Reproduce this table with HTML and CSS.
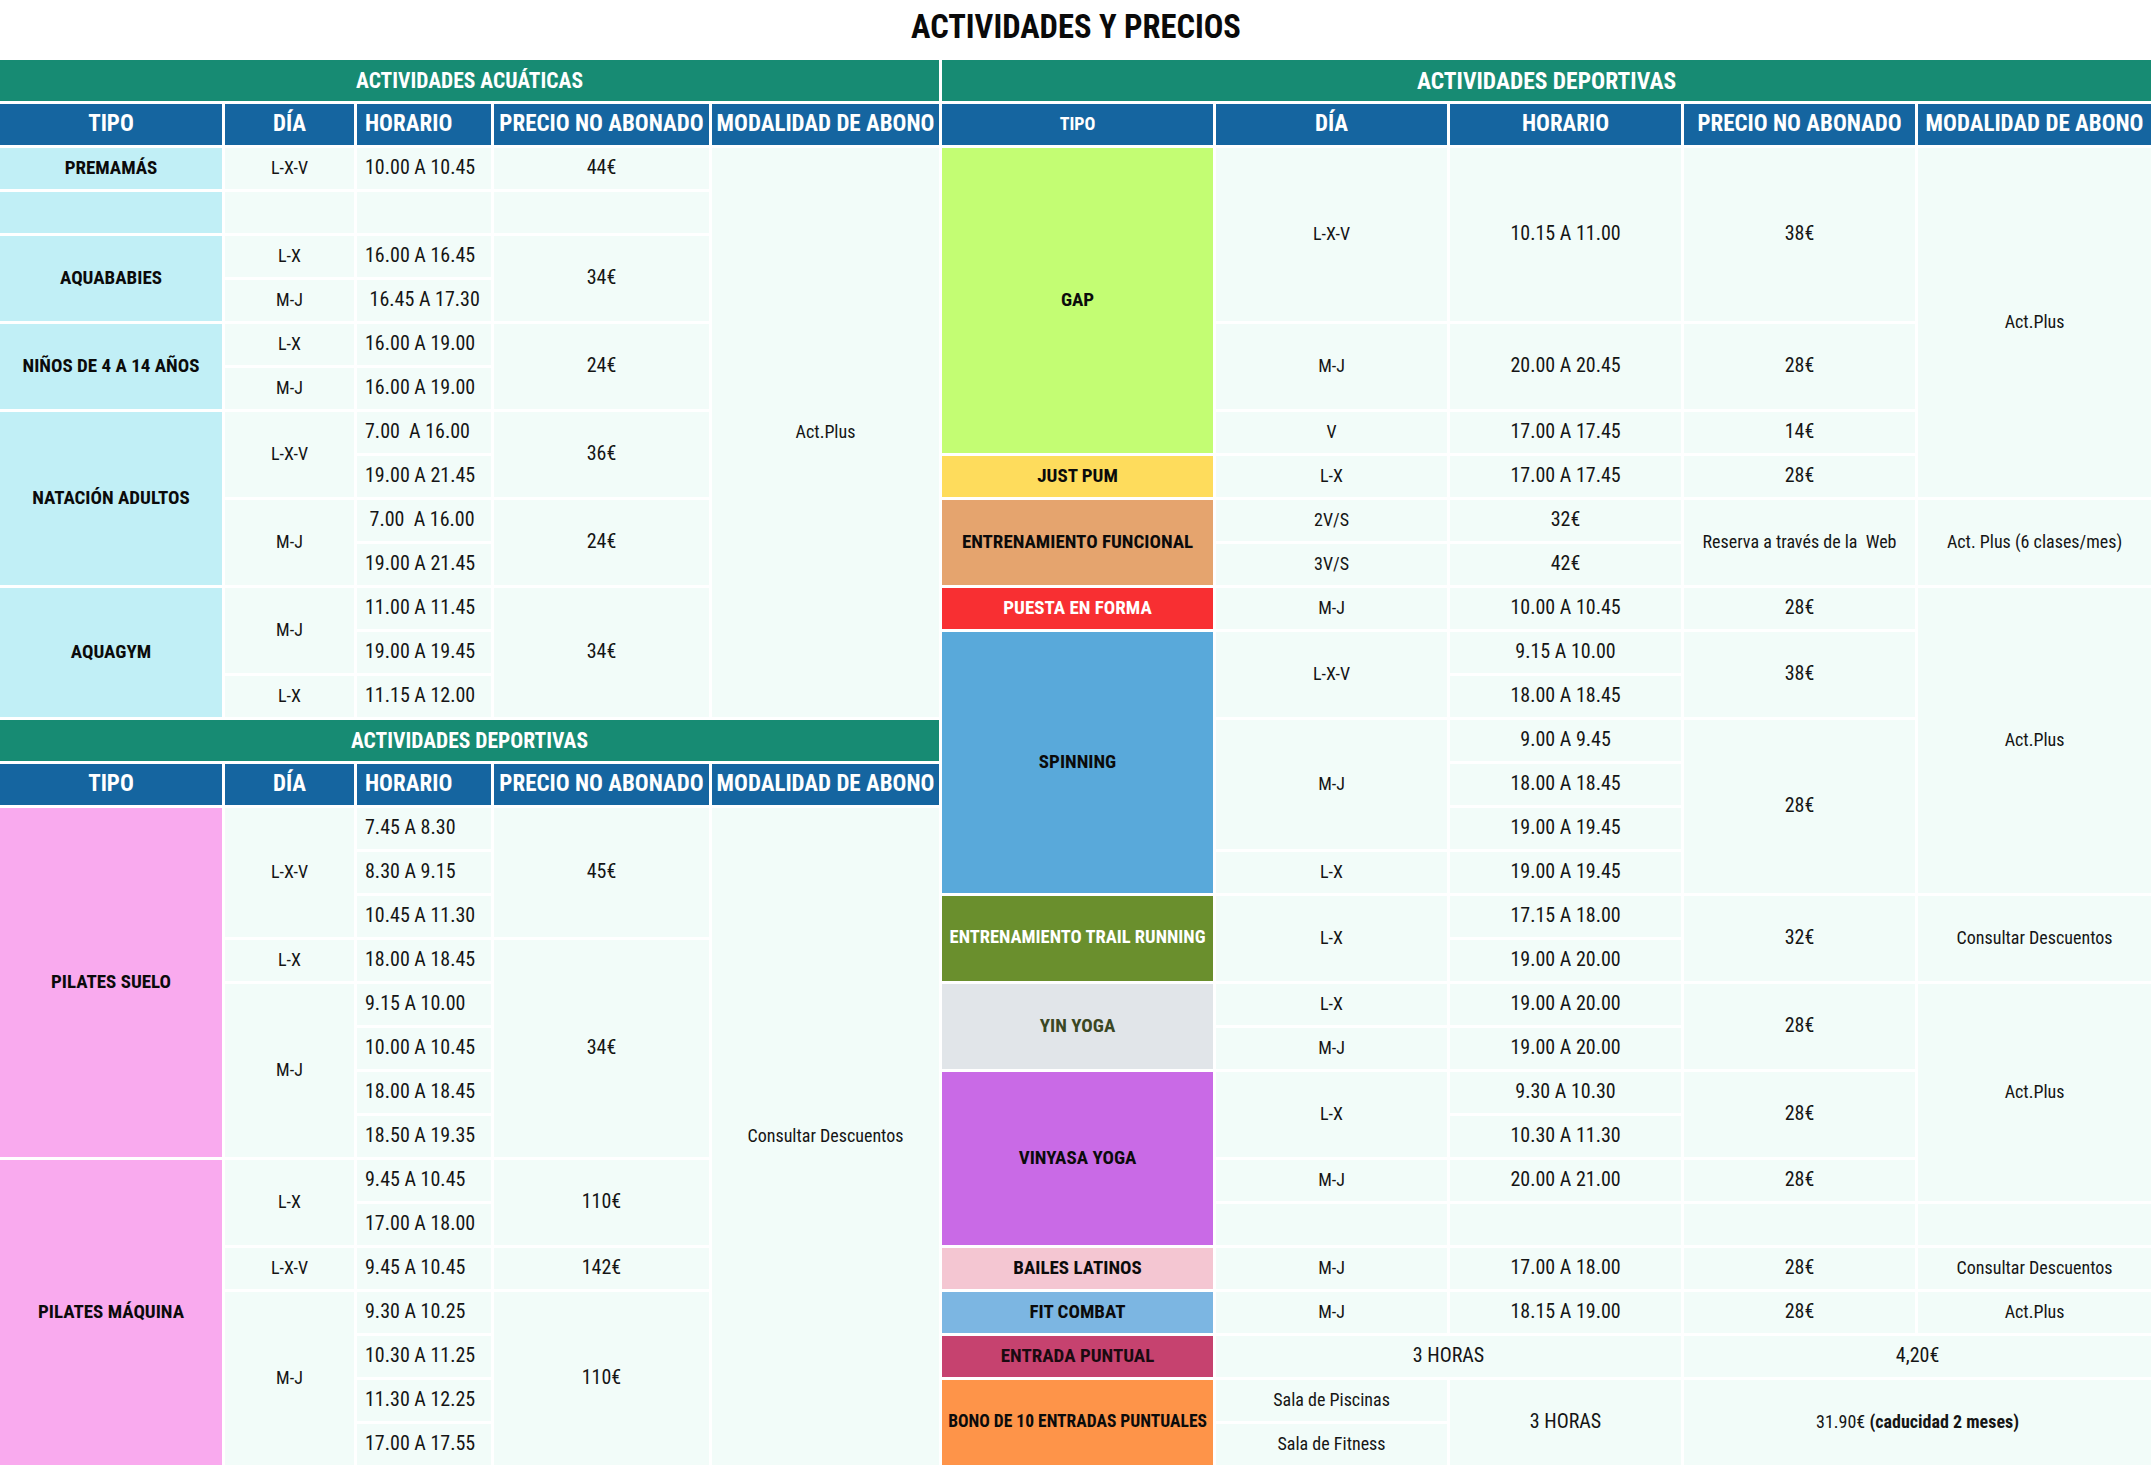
FILE: index.html
```html
<!DOCTYPE html>
<html lang="es">
<head>
<meta charset="utf-8">
<title>Actividades y precios</title>
<link rel="stylesheet" href="styles.css">
</head>
<body>
<h1 class="title">ACTIVIDADES Y PRECIOS</h1>
<div class="tables">
  <div class="left">
    <table class="grid lt">
      <colgroup><col class="l-tipo"><col class="l-dia"><col class="l-hor"><col class="l-pre"><col class="l-mod"></colgroup>
      <tr><th colspan="5" class="sec">ACTIVIDADES ACUÁTICAS</th></tr>
      <tr class="hd"><th>TIPO</th><th>DÍA</th><th class="al">HORARIO</th><th>PRECIO NO ABONADO</th><th>MODALIDAD DE ABONO</th></tr>
      <tr><td class="t aq">PREMAMÁS</td><td class="d">L-X-V</td><td class="h">10.00 A 10.45</td><td>44€</td><td class="x" rowspan="13">Act.Plus</td></tr>
      <tr><td class="t aq"></td><td></td><td></td><td></td></tr>
      <tr><td class="t aq" rowspan="2">AQUABABIES</td><td class="d">L-X</td><td class="h">16.00 A 16.45</td><td rowspan="2">34€</td></tr>
      <tr><td class="d">M-J</td><td class="h">&nbsp;16.45 A 17.30</td></tr>
      <tr><td class="t aq" rowspan="2">NIÑOS DE 4 A 14 AÑOS</td><td class="d">L-X</td><td class="h">16.00 A 19.00</td><td rowspan="2">24€</td></tr>
      <tr><td class="d">M-J</td><td class="h">16.00 A 19.00</td></tr>
      <tr><td class="t aq" rowspan="4">NATACIÓN ADULTOS</td><td class="d" rowspan="2">L-X-V</td><td class="h">7.00&nbsp; A 16.00</td><td rowspan="2">36€</td></tr>
      <tr><td class="h">19.00 A 21.45</td></tr>
      <tr><td class="d" rowspan="2">M-J</td><td class="h">&nbsp;7.00&nbsp; A 16.00</td><td rowspan="2">24€</td></tr>
      <tr><td class="h">19.00 A 21.45</td></tr>
      <tr><td class="t aq" rowspan="3">AQUAGYM</td><td class="d" rowspan="2">M-J</td><td class="h">11.00 A 11.45</td><td rowspan="3">34€</td></tr>
      <tr><td class="h">19.00 A 19.45</td></tr>
      <tr><td class="d">L-X</td><td class="h">11.15 A 12.00</td></tr>
    </table>
    <table class="grid lt second">
      <colgroup><col class="l-tipo"><col class="l-dia"><col class="l-hor"><col class="l-pre"><col class="l-mod"></colgroup>
      <tr><th colspan="5" class="sec">ACTIVIDADES DEPORTIVAS</th></tr>
      <tr class="hd"><th>TIPO</th><th>DÍA</th><th class="al">HORARIO</th><th>PRECIO NO ABONADO</th><th>MODALIDAD DE ABONO</th></tr>
      <tr><td class="t pk" rowspan="8">PILATES SUELO</td><td class="d" rowspan="3">L-X-V</td><td class="h">7.45 A 8.30</td><td rowspan="3">45€</td><td class="x" rowspan="15">Consultar Descuentos</td></tr>
      <tr><td class="h">8.30 A 9.15</td></tr>
      <tr><td class="h">10.45 A 11.30</td></tr>
      <tr><td class="d">L-X</td><td class="h">18.00 A 18.45</td><td rowspan="5">34€</td></tr>
      <tr><td class="d" rowspan="4">M-J</td><td class="h">9.15 A 10.00</td></tr>
      <tr><td class="h">10.00 A 10.45</td></tr>
      <tr><td class="h">18.00 A 18.45</td></tr>
      <tr><td class="h">18.50 A 19.35</td></tr>
      <tr><td class="t pk" rowspan="7">PILATES MÁQUINA</td><td class="d" rowspan="2">L-X</td><td class="h">9.45 A 10.45</td><td rowspan="2">110€</td></tr>
      <tr><td class="h">17.00 A 18.00</td></tr>
      <tr><td class="d">L-X-V</td><td class="h">9.45 A 10.45</td><td>142€</td></tr>
      <tr><td class="d" rowspan="4">M-J</td><td class="h">9.30 A 10.25</td><td rowspan="4">110€</td></tr>
      <tr><td class="h">10.30 A 11.25</td></tr>
      <tr><td class="h">11.30 A 12.25</td></tr>
      <tr><td class="h">17.00 A 17.55</td></tr>
    </table>
  </div>
  <table class="grid rt">
    <colgroup><col class="r-tipo"><col class="r-dia"><col class="r-hor"><col class="r-pre"><col class="r-mod"></colgroup>
    <tr><th colspan="5" class="sec big">ACTIVIDADES DEPORTIVAS</th></tr>
    <tr class="hd"><th class="small">TIPO</th><th>DÍA</th><th>HORARIO</th><th>PRECIO NO ABONADO</th><th>MODALIDAD DE ABONO</th></tr>
    <tr><td class="t gap" rowspan="7">GAP</td><td class="d" rowspan="4">L-X-V</td><td rowspan="4">10.15 A 11.00</td><td rowspan="4">38€</td><td class="x" rowspan="8">Act.Plus</td></tr>
    <tr></tr>
    <tr></tr>
    <tr></tr>
    <tr><td class="d" rowspan="2">M-J</td><td rowspan="2">20.00 A 20.45</td><td rowspan="2">28€</td></tr>
    <tr></tr>
    <tr><td class="d">V</td><td>17.00 A 17.45</td><td>14€</td></tr>
    <tr><td class="t pum">JUST PUM</td><td class="d">L-X</td><td>17.00 A 17.45</td><td>28€</td></tr>
    <tr><td class="t fun" rowspan="2">ENTRENAMIENTO FUNCIONAL</td><td class="d">2V/S</td><td>32€</td><td class="x" rowspan="2">Reserva a través de la&nbsp; Web</td><td class="x" rowspan="2">Act. Plus (6 clases/mes)</td></tr>
    <tr><td class="d">3V/S</td><td>42€</td></tr>
    <tr><td class="t pef">PUESTA EN FORMA</td><td class="d">M-J</td><td>10.00 A 10.45</td><td>28€</td><td class="x" rowspan="7">Act.Plus</td></tr>
    <tr><td class="t spin" rowspan="6">SPINNING</td><td class="d" rowspan="2">L-X-V</td><td>9.15 A 10.00</td><td rowspan="2">38€</td></tr>
    <tr><td>18.00 A 18.45</td></tr>
    <tr><td class="d" rowspan="3">M-J</td><td>9.00 A 9.45</td><td rowspan="4">28€</td></tr>
    <tr><td>18.00 A 18.45</td></tr>
    <tr><td>19.00 A 19.45</td></tr>
    <tr><td class="d">L-X</td><td>19.00 A 19.45</td></tr>
    <tr><td class="t trail" rowspan="2">ENTRENAMIENTO TRAIL RUNNING</td><td class="d" rowspan="2">L-X</td><td>17.15 A 18.00</td><td rowspan="2">32€</td><td class="x" rowspan="2">Consultar Descuentos</td></tr>
    <tr><td>19.00 A 20.00</td></tr>
    <tr><td class="t yin" rowspan="2">YIN YOGA</td><td class="d">L-X</td><td>19.00 A 20.00</td><td rowspan="2">28€</td><td class="x" rowspan="5">Act.Plus</td></tr>
    <tr><td class="d">M-J</td><td>19.00 A 20.00</td></tr>
    <tr><td class="t vin" rowspan="4">VINYASA YOGA</td><td class="d" rowspan="2">L-X</td><td>9.30 A 10.30</td><td rowspan="2">28€</td></tr>
    <tr><td>10.30 A 11.30</td></tr>
    <tr><td class="d">M-J</td><td>20.00 A 21.00</td><td>28€</td></tr>
    <tr><td></td><td></td><td></td><td></td></tr>
    <tr><td class="t bai">BAILES LATINOS</td><td class="d">M-J</td><td>17.00 A 18.00</td><td>28€</td><td class="x">Consultar Descuentos</td></tr>
    <tr><td class="t fit">FIT COMBAT</td><td class="d">M-J</td><td>18.15 A 19.00</td><td>28€</td><td class="x">Act.Plus</td></tr>
    <tr><td class="t ent">ENTRADA PUNTUAL</td><td colspan="2">3 HORAS</td><td colspan="2">4,20€</td></tr>
    <tr><td class="t bono" rowspan="2">BONO DE 10 ENTRADAS PUNTUALES</td><td class="x">Sala de Piscinas</td><td rowspan="2">3 HORAS</td><td class="x" colspan="2" rowspan="2">31.90€ <b>(caducidad 2 meses)</b></td></tr>
    <tr><td class="x">Sala de Fitness</td></tr>
  </table>
</div>
</body>
</html>
```

FILE: styles.css
```css
html, body {
  margin: 0;
  padding: 0;
  background: #ffffff;
  overflow: hidden;
}
body {
  width: 2151px;
  font-family: "Roboto Condensed", "Liberation Sans Narrow", "Liberation Sans", sans-serif;
  color: #111111;
}
.title {
  margin: 0;
  height: 57px;
  line-height: 55px;
  text-align: center;
  font-size: 32.5px;
  font-weight: 700;
  color: #0a0a0a;
  padding-left: 1px;
}
.tables {
  display: flex;
  align-items: flex-start;
  margin-left: -3px;
}
.left {
  display: flex;
  flex-direction: column;
}
.grid {
  border-collapse: separate;
  border-spacing: 3px;
  table-layout: fixed;
}
.lt { width: 945px; }
.second { margin-top: -3px; }
.rt { width: 1215px; margin-left: -3px; }
.l-tipo { width: 222px; }
.l-dia { width: 129px; }
.l-hor { width: 134px; }
.l-pre { width: 215px; }
.l-mod { width: 227px; }
.r-tipo { width: 271px; }
.r-dia { width: 231px; }
.r-hor { width: 231px; }
.r-pre { width: 231px; }
.r-mod { width: 233px; }
tr { height: 41px; }
th, td {
  padding: 0 2px;
  text-align: center;
  vertical-align: middle;
  white-space: nowrap;
  overflow: hidden;
}
td {
  background: #f2fcf9;
  font-size: 20px;
  font-weight: 400;
  color: #151515;
  padding-bottom: 3px;
}
td.d, td.x {
  font-size: 18px;
}
th {
  color: #ffffff;
  font-weight: 700;
}
.sec {
  background: #178b73;
  font-size: 21.5px;
}
.sec.big { font-size: 23.5px; }
.hd th {
  background: #1565a0;
  font-size: 23px;
  padding-bottom: 2px;
}
.hd th.small { font-size: 18px; }
.hd th.al, td.h {
  text-align: left;
  padding-left: 8px;
}
td.t {
  font-weight: 700;
  font-size: 19px;
  color: #0b0b0b;
  padding-bottom: 3px;
}
td.trail { font-size: 18.5px; }
td.bono { font-size: 17.5px; }
td b { font-weight: 700; }
.aq { background: #c1eff6; }
.pk { background: #f9aaee; }
.gap { background: #c3fd73; }
.pum { background: #fedc5c; }
.fun { background: #e5a46e; }
td.pef { background: #f82f32; color: #ffffff; }
.spin { background: #59a9da; }
td.trail { background: #6a8f2d; color: #ffffff; }
td.yin { background: #e1e5e9; color: #3a4723; }
.vin { background: #c96ae6; }
.bai { background: #f4c6d2; }
.fit { background: #7cb6e2; }
td.ent { background: #c6426f; color: #1a0a10; }
.bono { background: #fe9449; }
```
